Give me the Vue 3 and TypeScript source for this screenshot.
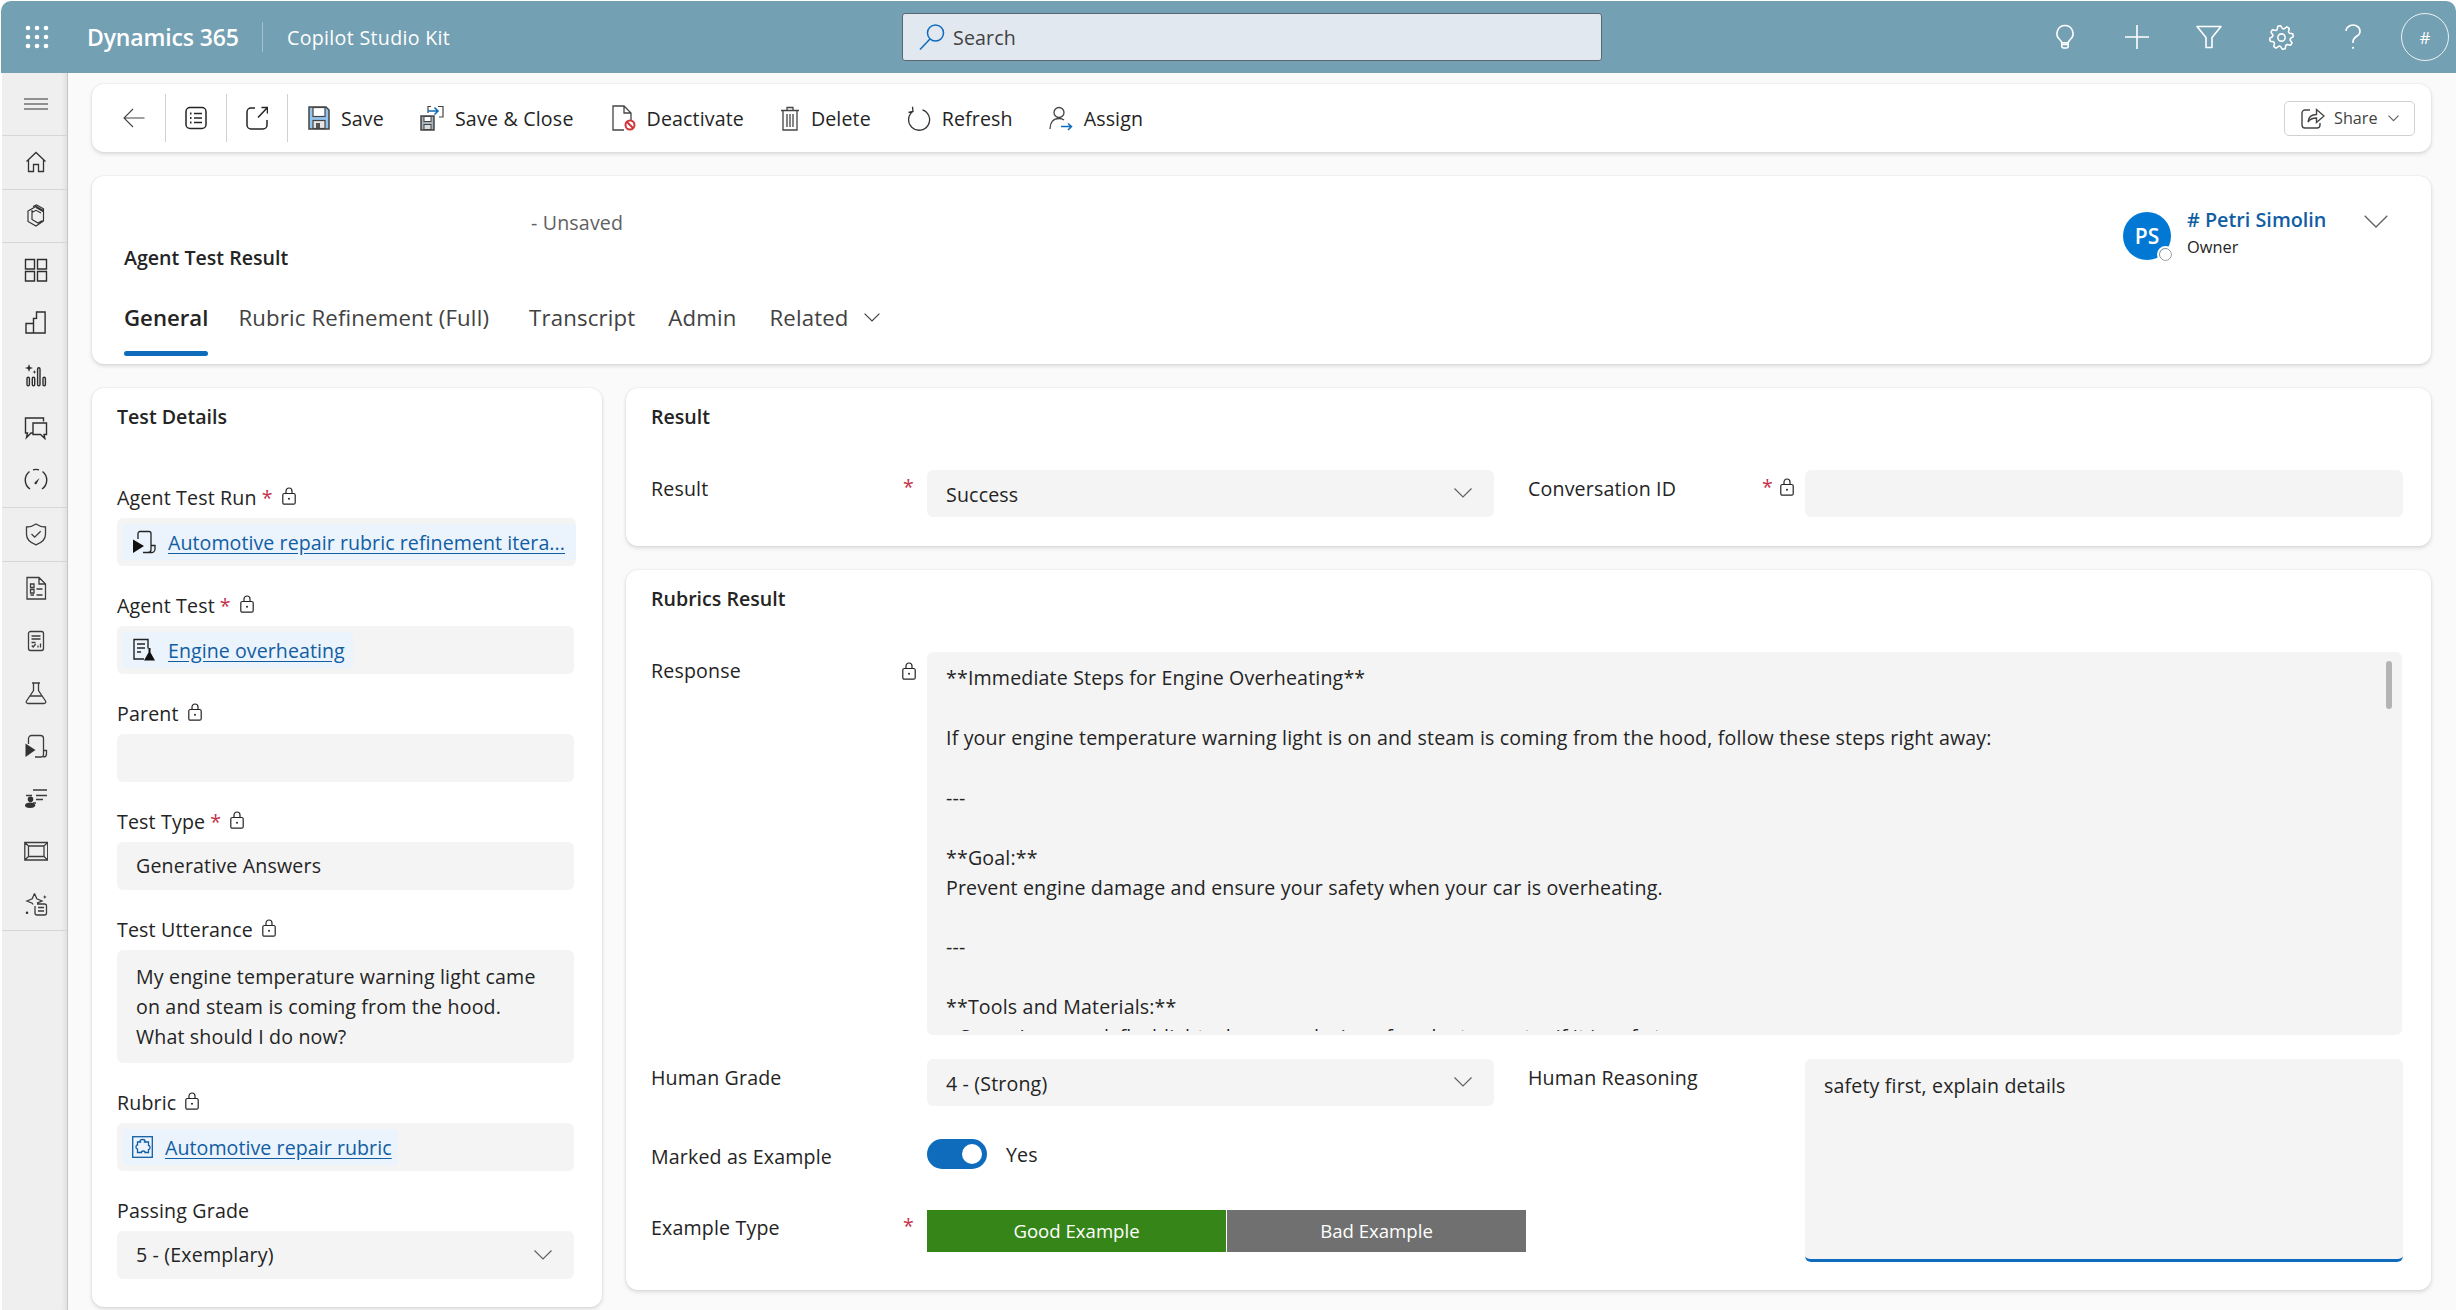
<script setup lang="ts">
interface NavIcon { d: string; fill?: string }
const gear = (() => {
  const n = 8
  const pts: string[] = []
  for (let i = 0; i < n; i++) {
    const a = (i / n) * Math.PI * 2 - Math.PI / 8
    const step = (Math.PI * 2) / n
    const p = (r: number, t: number) =>
      `${(12 + r * Math.cos(t)).toFixed(2)} ${(12 + r * Math.sin(t)).toFixed(2)}`
    pts.push(`${i === 0 ? 'M' : 'L'}${p(8.6, a - step * 0.14)}`)
    pts.push(`L${p(11.4, a + step * 0.1)}`)
    pts.push(`L${p(11.4, a + step * 0.4)}`)
    pts.push(`L${p(8.6, a + step * 0.64)}`)
  }
  return pts.join(' ') + ' Z'
})()

const navTop: NavIcon[][] = [
  [{ d: 'M2.5 11.5 12 2.500l9.500 9M4.500 10v11.500h5v-7h5v7h5V10' }],
  [{ d: 'M9 2.500 12.500 1l7 3.800v11.700l-3 1.700M12 3.500l7.500 4.200M4 7l8-4.500 7.500 4.200v10.300L12 22l-8-4.500zM8 6v9.500l6 3.500 4-2.300M8 8.500l4-2.200 5 2.800' }]
]
const navMid: NavIcon[][] = [
  [{ d: 'M1.500 1.500h9v9.500h-9zM13.500 1.500h9v9.500h-9zM1.500 13.500h9V23h-9zM13.500 13.500h9V23h-9z' }],
  [{ d: 'M2 13.500h7.500V23H2zM9.500 23V8.500l3-.1V2h8.600v21zM2 23h19' }],
  [
    { d: 'M3 15.500a1.200 1.200 0 0 1 2.400 0v6a1.200 1.200 0 0 1-2.400 0zM8.300 15.500a1.200 1.200 0 0 1 2.400 0v6a1.200 1.200 0 0 1-2.400 0zM13.600 6a1.200 1.200 0 0 1 2.400 0v15.500a1.200 1.200 0 0 1-2.400 0zM19 15.500a1.200 1.200 0 0 1 2.400 0v6a1.200 1.200 0 0 1-2.400 0z' },
    { d: 'M5 1l1.100 2.900L9 5 6.100 6.100 5 9 3.900 6.100 1 5l2.900-1.100zM10.500 7l.6 1.400 1.400.6-1.400.6-.6 1.400-.6-1.400-1.400-.6 1.400-.6z', fill: '#333' }
  ],
  [{ d: 'M19.500 5.500V2H1.500v15h2l-1 4.500 4.500-4.500h2.500M9 7h13.500v11.500h-2.500l.8 4-4.300-4H9z' }],
  [
    { d: 'M6 21A10.800 10.800 0 0 1 5.500 3.500M9 1.800a10.800 10.800 0 0 1 6 0M18.500 3.500A10.800 10.800 0 0 1 18 21' },
    { d: 'M10.500 14.500 15.500 10l-3 6a1.300 1.300 0 0 1-2-1.500z', fill: '#333' }
  ]
]
const navShield: NavIcon[][] = [
  [{ d: 'M12 2c2.800 2 5.800 3 9.500 3v7.500c0 4.700-3.200 8-9.500 10.300-6.300-2.300-9.500-5.600-9.500-10.300V5C6.200 5 9.200 4 12 2zM7.500 12l3.200 3.200 6-6' }]
]
const navLow: NavIcon[][] = [
  [{ d: 'M3 1.500h12l6.500 6.500v15H3zM15 1.500V8h6.500M6.500 8h3.500v3.500H6.500zM6.500 13.500h3.500V17H6.500zM6.500 19h3.500M12.500 13h6M12.500 19h6' }],
  [{ d: 'M6.500 2.500h11a2 2 0 0 1 2 2v15a2 2 0 0 1-2 2h-11a2 2 0 0 1-2-2v-15a2 2 0 0 1 2-2zM7.500 7h9M7.500 10h9M7.500 13.500h4M7.800 16.500l1.400 1.500 2.500-3M14 18.500v-2M16.500 18.500v-4' }],
  [{ d: 'M8 2h8M9.500 2v7.500L2.500 20c-.7 1.300 0 2.500 1.500 2.500h16c1.500 0 2.200-1.200 1.500-2.500l-7-10.500V2M6 15h12' }],
  [
    { d: 'M4.500 10V4.500a3 3 0 0 1 3-3h9a3 3 0 0 1 3 3v16a2.500 2.500 0 0 1-2.500 2.500H11M19.500 16.500h3v3.500a3 3 0 0 1-3 3' },
    { d: 'M1.500 9.500l10 6.500-10 7z', fill: '#333' }
  ],
  [
    { d: 'M9 3h14M12 8.500h11M2 8.500h6M12 12.500h7M9 16h3' },
    { d: 'M6.500 9.500a2.800 2.800 0 1 1 0 5.600 2.800 2.800 0 0 1 0-5.600zM6.500 15.500c3 0 4.800 1.200 4.800 2.800S9.500 21 6 21s-5-1-5-2.700 2.300-2.800 5.500-2.800z', fill: '#333' }
  ],
  [{ d: 'M.8 3.500h22.900v17.500H.8zM4.500 7h15.500v10.500H4.500zM.8 3.500 4.500 7M23.700 3.500 20 7M.8 21l3.700-3.500M23.700 21 20 17.500' }],
  [
    { d: 'M10.500 1.500 12.800 6.800 18 9l-5 2.200M10.500 1.500 8.200 6.800 3 9l5.200 2.200.8 1.300M13 12h7.500a2 2 0 0 1 2 2v7a2 2 0 0 1-2 2H13a2 2 0 0 1-2-2v-7M14 15.500h6M14 19h6' },
    { d: 'M20.800 3l.6 1.400 1.400.6-1.400.6-.6 1.400-.6-1.400-1.400-.6 1.400-.6zM3 19.500a1.300 1.300 0 1 1 0 2.600 1.300 1.300 0 0 1 0-2.600z', fill: '#333' }
  ]
]

const tabs = ['Rubric Refinement (Full)', 'Transcript', 'Admin']

const responseLines = [
  '**Immediate Steps for Engine Overheating**',
  '',
  'If your engine temperature warning light is on and steam is coming from the hood, follow these steps right away:',
  '',
  '---',
  '',
  '**Goal:**',
  'Prevent engine damage and ensure your safety when your car is overheating.',
  '',
  '---',
  '',
  '**Tools and Materials:**',
  "- Owner's manual, flashlight, gloves, and a jug of coolant or water if it is safe to use"
]
</script>

<template>
  <div class="app">
    <header class="topbar">
      <div class="brand">
        <svg class="waffle" width="24" height="24" viewBox="0 0 24 24" fill="#fff">
          <circle cx="3" cy="3" r="2.300" /><circle cx="12" cy="3" r="2.300" /><circle cx="21" cy="3" r="2.300" />
          <circle cx="3" cy="12" r="2.300" /><circle cx="12" cy="12" r="2.300" /><circle cx="21" cy="12" r="2.300" />
          <circle cx="3" cy="21" r="2.300" /><circle cx="12" cy="21" r="2.300" /><circle cx="21" cy="21" r="2.300" />
        </svg>
        <span class="d365">Dynamics 365</span>
        <span class="brand-sep"></span>
        <span class="kit">Copilot Studio Kit</span>
      </div>
      <div class="search">
        <svg width="26" height="26" viewBox="0 0 26 26" fill="none" stroke="#0f6cbd" stroke-width="1.500">
          <circle cx="16.500" cy="9" r="8" /><path d="M11 15 1 25.500" />
        </svg>
        <span>Search</span>
      </div>
      <div class="top-actions">
        <button class="top-btn">
          <svg width="24" height="26" viewBox="0 0 24 26" fill="none" stroke="#fff" stroke-width="1.600">
            <path d="M12 1.500a8 8 0 0 0-5.300 14c1.100 1 1.800 2 2.100 3.300h6.400c.3-1.300 1-2.300 2.100-3.300A8 8 0 0 0 12 1.500zM8.800 18.800v3.200a2 2 0 0 0 2 2h2.400a2 2 0 0 0 2-2v-3.200M9 20.500h6" />
          </svg>
        </button>
        <button class="top-btn">
          <svg width="26" height="26" viewBox="0 0 26 26" fill="none" stroke="#fff" stroke-width="1.600"><path d="M13 1v24M1 13h24" /></svg>
        </button>
        <button class="top-btn">
          <svg width="26" height="24" viewBox="0 0 26 24" fill="none" stroke="#fff" stroke-width="1.600" stroke-linejoin="round"><path d="M1 1.500h24l-9 11v10h-6v-10z" /></svg>
        </button>
        <button class="top-btn">
          <svg width="25" height="25" viewBox="0 0 24 24" fill="none" stroke="#fff" stroke-width="1.500" stroke-linejoin="round"><path :d="gear" /><circle cx="12" cy="12" r="3.500" /></svg>
        </button>
        <button class="top-btn">
          <svg width="18" height="26" viewBox="0 0 18 26" fill="none" stroke="#fff" stroke-width="1.600"><path d="M2 7a7 6 0 1 1 11 5c-2.500 1.700-4 3-4 5.500v1.500" /><circle cx="9" cy="23.800" r="1.100" fill="#fff" stroke="none" /></svg>
        </button>
        <span class="me">#</span>
      </div>
    </header>

    <div class="body">
      <nav class="nav">
        <div class="nav-burger">
          <svg width="24" height="12" viewBox="0 0 24 12" stroke="#333" stroke-width="1.200"><path d="M0 1h24M0 6h24M0 11h24" /></svg>
        </div>
        <div v-for="(g, i) in navTop" :key="'t' + i" class="nav-group">
          <div class="nav-item">
            <svg width="24" height="24" viewBox="0 0 24 24" fill="none" stroke="#333" :stroke-width="i === 1 ? 1.150 : 1.300">
              <path v-for="(p, k) in g" :key="k" :d="p.d" :fill="p.fill || 'none'" :stroke="p.fill ? 'none' : undefined" />
            </svg>
          </div>
        </div>
        <div class="nav-group">
          <div v-for="(g, i) in navMid" :key="'m' + i" class="nav-item">
            <svg width="24" height="24" viewBox="0 0 24 24" fill="none" stroke="#2e2e2e" stroke-width="1.400">
              <path v-for="(p, k) in g" :key="k" :d="p.d" :fill="p.fill || 'none'" :stroke="p.fill ? 'none' : undefined" />
            </svg>
          </div>
        </div>
        <div class="nav-group">
          <div v-for="(g, i) in navShield" :key="'s' + i" class="nav-item">
            <svg width="24" height="24" viewBox="0 0 24 24" fill="none" stroke="#3d3d3d" stroke-width="1.300">
              <path v-for="(p, k) in g" :key="k" :d="p.d" :fill="p.fill || 'none'" :stroke="p.fill ? 'none' : undefined" />
            </svg>
          </div>
        </div>
        <div class="nav-group">
          <div v-for="(g, i) in navLow" :key="'l' + i" class="nav-item">
            <svg width="24" height="24" viewBox="0 0 24 24" fill="none" stroke="#3d3d3d" stroke-width="1.300">
              <path v-for="(p, k) in g" :key="k" :d="p.d" :fill="p.fill || 'none'" :stroke="p.fill ? 'none' : undefined" />
            </svg>
          </div>
        </div>
      </nav>

      <main class="main">
        <section class="card cmd">
          <div class="cmd-icon first">
            <svg width="22" height="20" viewBox="0 0 22 20" fill="none" stroke="#444" stroke-width="1.100"><path d="M21.500 10H1M10 1 1 10l9 9" /></svg>
          </div>
          <div class="cmd-icon">
            <svg width="22" height="24" viewBox="0 0 22 24" fill="none" stroke="#242424" stroke-width="1.500">
              <rect x="1" y="1.500" width="20" height="21" rx="4" />
              <path d="M9 7.500h8M9 12h8M9 16.500h8" />
              <path d="M5 7.500h1.500M5 12h1.500M5 16.500h1.500" stroke-width="2" />
            </svg>
          </div>
          <div class="cmd-icon">
            <svg width="22" height="24" viewBox="0 0 22 24" fill="none" stroke="#242424" stroke-width="1.500">
              <path d="M9 2H5a4 4 0 0 0-4 4v13a4 4 0 0 0 4 4h12a4 4 0 0 0 4-4v-5M12 11.500 21 2M15.500 1.500h6v6" />
            </svg>
          </div>
          <div class="tbtn first-text">
            <svg width="22" height="24" viewBox="0 0 22 24">
              <path d="M1 1h17l3 3v19H1z" fill="#92c4ee" stroke="#444" stroke-width="1.500" />
              <rect x="5" y="1.500" width="12" height="9" fill="#fff" stroke="#444" stroke-width="1.200" />
              <rect x="5" y="14.500" width="12" height="8" fill="#e6e6e6" stroke="#444" stroke-width="1.200" />
              <rect x="8" y="17" width="4" height="5" fill="#555" />
            </svg>
            <span>Save</span>
          </div>
          <div class="tbtn close-btn">
            <svg width="24" height="26" viewBox="0 0 24 26">
              <path d="M1 11h13v14H1z" fill="#a7b3bd" stroke="#444" stroke-width="1.500" />
              <rect x="4" y="11.500" width="7" height="5" fill="#fff" stroke="#444" />
              <rect x="4" y="19.500" width="7" height="5" fill="#ddd" stroke="#444" />
              <path d="M8 8V1.500h3M18 1.500h5V12h-4" fill="none" stroke="#444" stroke-width="1.200" />
              <path d="M8 6h10M14.500 2.500 18 6l-3.500 3.500" fill="none" stroke="#0f6cbd" stroke-width="1.600" />
            </svg>
            <span>Save &amp; Close</span>
          </div>
          <div class="tbtn">
            <svg width="24" height="26" viewBox="0 0 24 26">
              <path d="M12 25H1V1h11l7 7v8M12 1v7h7" fill="none" stroke="#444" stroke-width="1.300" />
              <circle cx="18" cy="20" r="4.500" fill="#fff" stroke="#d13438" stroke-width="2" />
              <path d="m15 17 6 6" stroke="#d13438" stroke-width="2" />
            </svg>
            <span>Deactivate</span>
          </div>
          <div class="tbtn">
            <svg width="20" height="25" viewBox="0 0 20 25" fill="none" stroke="#444" stroke-width="1.300">
              <path d="M1 4.500h18M7 4.500V1.500h6v3M3 4.500v19.500h14V4.500M7 8v13M10 8v13M13 8v13" />
            </svg>
            <span>Delete</span>
          </div>
          <div class="tbtn">
            <svg width="24" height="25" viewBox="0 0 24 25" fill="none" stroke="#333" stroke-width="1.300">
              <path d="M15.500 3.800A10.500 10.500 0 1 1 6 5.200M5.500 0.800 6 5.500 1.500 6.500" />
            </svg>
            <span>Refresh</span>
          </div>
          <div class="tbtn">
            <svg width="24" height="25" viewBox="0 0 24 25" fill="none" stroke="#444" stroke-width="1.300">
              <circle cx="10" cy="6.500" r="5" />
              <path d="M1 23c0-6 3-10.500 9-10.500 2 0 3.800.5 5 1.500" />
              <path d="M12 20.500h10.500M19 17.500l3.500 3-3.500 3.500" stroke="#0f6cbd" stroke-width="1.500" />
            </svg>
            <span>Assign</span>
          </div>
          <div class="share">
            <svg width="24" height="22" viewBox="0 0 24 22" fill="none" stroke="#444" stroke-width="1.400">
              <path d="M9 3H4a3 3 0 0 0-3 3v12a3 3 0 0 0 3 3h12a3 3 0 0 0 3-3v-2M7 15c.5-5 4-7.500 8.500-7.500V2.500L23 9l-7.500 6.500v-4.500c-3.500 0-6.500 1-8.500 4z" />
            </svg>
            <span>Share</span>
            <svg class="share-chev" width="11" height="7" viewBox="0 0 11 7" fill="none" stroke="#616161" stroke-width="1.100"><path d="m.5.700 5 5 5-5" /></svg>
          </div>
        </section>

        <section class="card head">
          <div class="head-top">
            <div class="head-title">
              <div class="name-row"><span class="name-blank"></span><span class="unsaved">- Unsaved</span></div>
              <div class="entity">Agent Test Result</div>
            </div>
            <div class="owner">
              <div class="avatar">PS<span class="presence"></span></div>
              <div class="owner-text">
                <div class="owner-name"># Petri Simolin</div>
                <div class="owner-role">Owner</div>
              </div>
              <svg class="owner-chev" width="24" height="13" viewBox="0 0 24 13" fill="none" stroke="#616161" stroke-width="1.300"><path d="m.7.700 11.300 11.300L23.300.7" /></svg>
            </div>
          </div>
          <div class="tabs">
            <span class="tab active">General</span>
            <span v-for="t in tabs" :key="t" class="tab">{{ t }}</span>
            <span class="tab">Related
              <svg class="tab-chev" width="16" height="9" viewBox="0 0 16 9" fill="none" stroke="#424242" stroke-width="1.200"><path d="m.6.600 7.400 7.400L15.400.6" /></svg>
            </span>
          </div>
        </section>

        <div class="columns">
          <section class="card left">
            <h2 class="title">Test Details</h2>
            <div class="stack">
              <div class="field">
                <div class="lbl">Agent Test Run <i class="req">*</i>
                  <svg class="lock" width="14" height="18" viewBox="0 0 14 18" fill="none" stroke="#242424" stroke-width="1.200"><path d="M4 6.500V4a3 3 0 0 1 6 0v2.500" /><rect x=".8" y="6.500" width="12.400" height="10.700" rx="1.500" /><circle cx="7" cy="11.800" r="1" fill="#242424" stroke="none" /></svg>
                </div>
                <div class="ctl wide">
                  <div class="pill full">
                    <svg class="pill-ic" width="24" height="24" viewBox="0 0 24 24">
                      <path d="M6 9V3.500a2 2 0 0 1 2-2h9a2 2 0 0 1 2 2v16a3 3 0 0 1-3 3h-5M19 15.500h4V19a3.500 3.500 0 0 1-3.500 3.500H16" fill="none" stroke="#242424" stroke-width="1.300" />
                      <path d="M1 9.500 12 16 1 23z" fill="#111" />
                    </svg>
                    <a class="link">Automotive repair rubric refinement itera...</a>
                  </div>
                </div>
              </div>
              <div class="field">
                <div class="lbl">Agent Test <i class="req">*</i>
                  <svg class="lock" width="14" height="18" viewBox="0 0 14 18" fill="none" stroke="#242424" stroke-width="1.200"><path d="M4 6.500V4a3 3 0 0 1 6 0v2.500" /><rect x=".8" y="6.500" width="12.400" height="10.700" rx="1.500" /><circle cx="7" cy="11.800" r="1" fill="#242424" stroke="none" /></svg>
                </div>
                <div class="ctl">
                  <div class="pill">
                    <svg class="pill-ic" width="24" height="24" viewBox="0 0 24 24">
                      <path d="M12 21H2V1.500h14v9M5 6h8M5 10h8M5 14h4" fill="none" stroke="#242424" stroke-width="1.400" />
                      <path d="M15 10h5M16.500 10v4.500L12 22.500h11L18.500 14.500V10z" fill="#111" />
                    </svg>
                    <a class="link">Engine overheating</a>
                  </div>
                </div>
              </div>
              <div class="field">
                <div class="lbl">Parent
                  <svg class="lock" width="14" height="18" viewBox="0 0 14 18" fill="none" stroke="#242424" stroke-width="1.200"><path d="M4 6.500V4a3 3 0 0 1 6 0v2.500" /><rect x=".8" y="6.500" width="12.400" height="10.700" rx="1.500" /><circle cx="7" cy="11.800" r="1" fill="#242424" stroke="none" /></svg>
                </div>
                <div class="ctl"></div>
              </div>
              <div class="field">
                <div class="lbl">Test Type <i class="req">*</i>
                  <svg class="lock" width="14" height="18" viewBox="0 0 14 18" fill="none" stroke="#242424" stroke-width="1.200"><path d="M4 6.500V4a3 3 0 0 1 6 0v2.500" /><rect x=".8" y="6.500" width="12.400" height="10.700" rx="1.500" /><circle cx="7" cy="11.800" r="1" fill="#242424" stroke="none" /></svg>
                </div>
                <div class="ctl pad">Generative Answers</div>
              </div>
              <div class="field">
                <div class="lbl">Test Utterance
                  <svg class="lock" width="14" height="18" viewBox="0 0 14 18" fill="none" stroke="#242424" stroke-width="1.200"><path d="M4 6.500V4a3 3 0 0 1 6 0v2.500" /><rect x=".8" y="6.500" width="12.400" height="10.700" rx="1.500" /><circle cx="7" cy="11.800" r="1" fill="#242424" stroke="none" /></svg>
                </div>
                <div class="ctl multi">My engine temperature warning light came<br />on and steam is coming from the hood.<br />What should I do now?</div>
              </div>
              <div class="field">
                <div class="lbl">Rubric
                  <svg class="lock" width="14" height="18" viewBox="0 0 14 18" fill="none" stroke="#242424" stroke-width="1.200"><path d="M4 6.500V4a3 3 0 0 1 6 0v2.500" /><rect x=".8" y="6.500" width="12.400" height="10.700" rx="1.500" /><circle cx="7" cy="11.800" r="1" fill="#242424" stroke="none" /></svg>
                </div>
                <div class="ctl">
                  <div class="pill rubric">
                    <svg class="pill-ic" width="21" height="24" viewBox="0 0 21 24" fill="none" stroke="#115ea3" stroke-width="1.300">
                      <rect x=".7" y="1.700" width="19.600" height="20.600" />
                      <path d="M8 6c0-2 5-2 5 0l-.5 1h4v3.500c2-.5 2 4.500 0 4v3h-3.500c.5-2-4-2-3.500 0H5.500v-3.500c-2 .5-2-4.500 0-4V7H8.500z" />
                    </svg>
                    <a class="link">Automotive repair rubric</a>
                  </div>
                </div>
              </div>
              <div class="field last">
                <div class="lbl">Passing Grade</div>
                <div class="ctl pad sel">5 - (Exemplary)
                  <svg width="18" height="10" viewBox="0 0 18 10" fill="none" stroke="#616161" stroke-width="1.200"><path d="m.5.500 8.500 8.500 8.500-8.500" /></svg>
                </div>
              </div>
            </div>
          </section>

          <div class="right">
            <section class="card result">
              <h2 class="title">Result</h2>
              <div class="row result-row">
                <div class="rlbl"><span>Result</span><i class="req">*</i></div>
                <div class="ctl pad sel sel-low">Success
                  <svg width="18" height="10" viewBox="0 0 18 10" fill="none" stroke="#616161" stroke-width="1.200"><path d="m.5.500 8.500 8.500 8.500-8.500" /></svg>
                </div>
                <div class="rlbl second"><span>Conversation ID</span>
                  <span class="marks"><i class="req">*</i>
                    <svg width="14" height="18" viewBox="0 0 14 18" fill="none" stroke="#242424" stroke-width="1.200"><path d="M4 6.500V4a3 3 0 0 1 6 0v2.500" /><rect x=".8" y="6.500" width="12.400" height="10.700" rx="1.500" /><circle cx="7" cy="11.800" r="1" fill="#242424" stroke="none" /></svg>
                  </span>
                </div>
                <div class="ctl"></div>
              </div>
            </section>

            <section class="card rubrics">
              <h2 class="title">Rubrics Result</h2>
              <div class="resp-row">
                <div class="rlbl"><span>Response</span>
                  <svg width="14" height="18" viewBox="0 0 14 18" fill="none" stroke="#242424" stroke-width="1.200"><path d="M4 6.500V4a3 3 0 0 1 6 0v2.500" /><rect x=".8" y="6.500" width="12.400" height="10.700" rx="1.500" /><circle cx="7" cy="11.800" r="1" fill="#242424" stroke="none" /></svg>
                </div>
                <div class="ctl response">
                  <div class="resp-text">
                    <div v-for="(l, i) in responseLines" :key="i" class="resp-line">{{ l }}</div>
                  </div>
                  <span class="thumb"></span>
                </div>
              </div>
              <div class="split">
                <div class="split-left">
                  <div class="srow">
                    <div class="rlbl"><span>Human Grade</span></div>
                    <div class="ctl pad sel sel-low">4 - (Strong)
                      <svg width="18" height="10" viewBox="0 0 18 10" fill="none" stroke="#616161" stroke-width="1.200"><path d="m.5.500 8.500 8.500 8.500-8.500" /></svg>
                    </div>
                  </div>
                  <div class="srow toggle-row">
                    <div class="rlbl plain"><span>Marked as Example</span></div>
                    <div class="toggle-wrap"><span class="toggle"><span class="knob"></span></span><span class="yes">Yes</span></div>
                  </div>
                  <div class="srow choice-row">
                    <div class="rlbl plain"><span>Example Type</span><i class="req">*</i></div>
                    <div class="choices"><span class="good">Good Example</span><span class="bad">Bad Example</span></div>
                  </div>
                </div>
                <div class="split-right">
                  <div class="rlbl"><span>Human Reasoning</span></div>
                  <div class="ctl reason">safety first, explain details</div>
                </div>
              </div>
            </section>
          </div>
        </div>
      </main>
    </div>
  </div>
</template>

<style scoped>
.app {
  width: 2456px;
  height: 1310px;
  background: #fff;
  display: flex;
  flex-direction: column;
  overflow: hidden;
  font-family: "Open Sans", "Noto Sans", sans-serif;
  font-size: 19.6px;
  color: #242424;
  letter-spacing: 0.16px;
}
svg { display: block; flex: none; }
i { font-style: normal; }

.topbar {
  height: 72px;
  margin: 1px 0 0 1px;
  background: #74a0b3;
  border-radius: 10px 10px 0 0;
  display: flex;
  align-items: center;
  flex: none;
  color: #fff;
}
.brand { width: 901px; display: flex; align-items: center; }
.waffle { margin-left: 24px; }
.d365 { margin-left: 38px; font-size: 23px; font-weight: 600; letter-spacing: -0.15px; width: 152px; white-space: nowrap; }
.brand-sep { margin-left: 23px; width: 1px; height: 30px; background: rgba(255, 255, 255, 0.35); }
.kit { margin-left: 24px; white-space: nowrap; letter-spacing: 0.32px; }
.search {
  width: 700px;
  height: 48px;
  box-sizing: border-box;
  background: #e1e8ef;
  border: 1px solid #5c6670;
  border-radius: 3px;
  display: flex;
  align-items: center;
  padding-left: 16px;
  color: #424242;
}
.search span { margin-left: 8px; }
.top-actions { margin-left: auto; display: flex; align-items: center; padding-right: 7px; }
.top-btn { width: 72px; height: 48px; background: none; border: 0; padding: 0; display: flex; align-items: center; justify-content: center; }
.me {
  margin-left: 12px;
  width: 48px;
  height: 48px;
  box-sizing: border-box;
  border: 1px solid rgba(255, 255, 255, 0.85);
  border-radius: 50%;
  display: flex;
  align-items: center;
  justify-content: center;
  font-size: 17px;
}

.body { flex: 1; display: flex; min-height: 0; }
.nav {
  width: 65px;
  margin-left: 2px;
  background: #efefef;
  box-sizing: content-box;
  border-right: 1px solid #c6c6c6;
  box-shadow: inset -7px 0 7px -7px rgba(0, 0, 0, 0.12);
  flex: none;
}
.nav-burger { height: 62px; border-bottom: 1px solid #d6d6d6; display: flex; align-items: center; justify-content: center; padding-left: 3px; }
.nav-group { border-bottom: 1px solid #d6d6d6; }
.nav-item { height: 52.7px; display: flex; align-items: center; justify-content: center; padding-left: 3px; }

.main { flex: 1; background: #fafafa; padding: 11px 25px 0 24px; min-width: 0; }
.card {
  background: #fff;
  border-radius: 12px;
  box-shadow: 0 2px 4px rgba(0, 0, 0, 0.13), 0 0 2px rgba(0, 0, 0, 0.1);
}

.cmd { height: 68px; display: flex; align-items: center; margin-bottom: 24px; }
.cmd-icon { height: 48px; width: 61px; box-sizing: border-box; border-right: 1px solid #d1d1d1; display: flex; align-items: center; justify-content: center; }
.cmd-icon.first { width: 74px; padding-left: 10px; }
.tbtn { display: flex; align-items: center; gap: 11px; margin-right: 36px; white-space: nowrap; letter-spacing: 0.12px; }
.close-btn { margin-right: 38px; letter-spacing: 0.2px; }
.first-text { margin-left: 20px; }
.share {
  margin-left: auto;
  margin-right: 16px;
  width: 131px;
  height: 35px;
  box-sizing: border-box;
  border: 1px solid #d1d1d1;
  border-radius: 5px;
  display: flex;
  align-items: center;
  padding-left: 16px;
  font-size: 16.2px;
  letter-spacing: 0;
  color: #424242;
}
.share span { margin-left: 9px; }
.share-chev { margin-left: 10px; }

.head { height: 188px; box-sizing: border-box; padding: 33px 0 8px 32px; margin-bottom: 24px; }
.head-top { display: flex; justify-content: space-between; align-items: flex-start; }
.name-row { display: flex; line-height: 28px; }
.name-blank { width: 407px; }
.unsaved { color: #616161; }
.entity { margin-top: 7px; line-height: 28px; font-weight: 600; font-size: 19.600px; letter-spacing: 0; }
.owner { display: flex; align-items: flex-start; padding-right: 43px; margin-top: 3px; }
.avatar {
  width: 48px;
  height: 48px;
  border-radius: 50%;
  background: #0078d4;
  color: #fff;
  font-weight: 600;
  font-size: 21px;
  letter-spacing: 0;
  display: flex;
  align-items: center;
  justify-content: center;
  position: relative;
}
.presence {
  position: absolute;
  right: -1px;
  bottom: -1px;
  width: 11px;
  height: 11px;
  border: 1.500px solid #8a8a8a;
  outline: 2px solid #fff;
  border-radius: 50%;
  background: #fff;
}
.owner-text { margin-left: 16px; margin-top: -6px; width: 177px; }
.owner-name { line-height: 28px; color: #115ea3; font-weight: 600; font-size: 19.800px; letter-spacing: 0; }
.owner-role { line-height: 26px; font-size: 16.400px; letter-spacing: 0; }
.owner-chev { margin-top: 3px; }
.tabs { display: flex; margin-top: 31px; font-size: 22.200px; letter-spacing: 0.16px; line-height: 30px; }
.tab { padding-bottom: 23px; margin-right: 33px; display: flex; white-space: nowrap; color: #424242; position: relative; }
.tab:nth-child(2) { margin-right: 40px; }
.tab.active { color: #242424; font-weight: 600; letter-spacing: 0; margin-right: 30px; }
.tab.active::after { content: ""; position: absolute; left: 0; right: 0; bottom: 0; height: 5px; background: #0f6cbd; border-radius: 3px; }
.tab-chev { margin: 10px 0 0 15px; }

.columns { display: flex; gap: 24px; align-items: flex-start; }
.left { width: 510px; box-sizing: border-box; padding: 15px 28px 28px 25px; }
.title { margin: 0; font-size: 19.600px; letter-spacing: 0; line-height: 28px; font-weight: 600; color: #242424; }
.stack { margin-top: 53px; }
.field { margin-bottom: 26px; }
.field.last { margin-bottom: 0; }
.lbl { line-height: 28px; height: 28px; display: flex; align-items: center; white-space: nowrap; margin-bottom: 6px; }
.req { color: #c4314b; margin-left: 5px; line-height: 1; }
.lock { margin-left: 9px; margin-top: -4px; }
.ctl { height: 48px; background: #f4f4f4; border-radius: 6px; position: relative; box-sizing: border-box; white-space: nowrap; }
.ctl.wide { margin-right: -2px; padding: 6px 0 6px 6px; }
.ctl:has(.pill):not(.wide) { padding: 6px; }
.pad { padding: 0 19px; line-height: 48px; }
.sel { display: flex; align-items: center; justify-content: space-between; padding-right: 22px; }
.sel-low { padding-top: 2px; }
.sel-low svg { margin-top: -3px; }
.multi { height: 113px; padding: 12px 19px; line-height: 30px; }
.pill { height: 36px; display: inline-flex; align-items: center; background: #ebf3fc; border-radius: 4px; padding: 0 8px 0 9px; }
.pill.full { display: flex; padding-right: 12px; }
.pill.rubric { padding-right: 6px; }
.pill-ic { margin-right: 12px; }
.link { color: #115ea3; text-decoration: underline; text-underline-offset: 3px; white-space: nowrap; letter-spacing: 0.06px; }

.right { flex: 1; min-width: 0; display: flex; flex-direction: column; gap: 24px; }
.result { height: 158px; box-sizing: border-box; padding: 15px 0 0 25px; }
.row { display: grid; grid-template-columns: 276px 567px 311px 598px; align-items: start; }
.result-row { margin-top: 39px; }
.second { padding-left: 34px; box-sizing: border-box; }
.marks { display: flex; align-items: center; gap: 5px; }
.marks .req { margin: 0; }
.marks svg { margin-top: -4px; }
.rlbl { display: flex; justify-content: space-between; align-items: center; line-height: 28px; height: 28px; margin-top: 5px; padding-right: 11px; box-sizing: border-box; white-space: nowrap; }
.rlbl .req { margin: -4px 2px 0 0; }
.result-row .ctl { height: 47px; }

.rubrics { padding: 15px 0 28px 25px; }
.resp-row { display: grid; grid-template-columns: 276px 1475px; margin-top: 39px; }
.resp-row .rlbl { padding-right: 11px; }
.response { height: 383px; padding: 11px 19px 0; white-space: normal; }
.resp-text { height: 368px; overflow: hidden; }
.resp-line { line-height: 29.950px; height: 29.950px; white-space: nowrap; }
.thumb { position: absolute; right: 10px; top: 9px; width: 6px; height: 48px; background: #b4b4b4; border-radius: 3px; }

.split { display: flex; margin-top: 24px; }
.split-left { width: 877px; }
.srow { display: grid; grid-template-columns: 276px 567px; align-items: start; }
.srow .ctl { height: 47px; }
.toggle-row { margin-top: 33px; }
.choice-row { margin-top: 39px; }
.rlbl.plain { margin-top: 4px; }
.toggle-wrap { display: flex; align-items: center; height: 30px; }
.toggle { width: 60px; height: 30px; background: #0f6cbd; border-radius: 15px; position: relative; display: block; }
.knob { position: absolute; right: 5px; top: 5px; width: 20px; height: 20px; border-radius: 50%; background: #fff; }
.yes { margin-left: 19px; }
.choices { display: flex; gap: 1px; width: 599px; height: 42px; color: #fff; font-size: 18.600px; letter-spacing: 0; }
.good, .bad { flex: 1; display: flex; align-items: center; justify-content: center; padding-bottom: 2px; box-sizing: border-box; }
.good { background: #368518; }
.bad { background: #707070; }
.split-right { width: 875px; display: grid; grid-template-columns: 277px 598px; align-items: start; }
.reason {
  height: 203px;
  border-bottom: 3px solid #0f6cbd;
  padding: 12px 19px;
  line-height: 30px;
}
</style>
